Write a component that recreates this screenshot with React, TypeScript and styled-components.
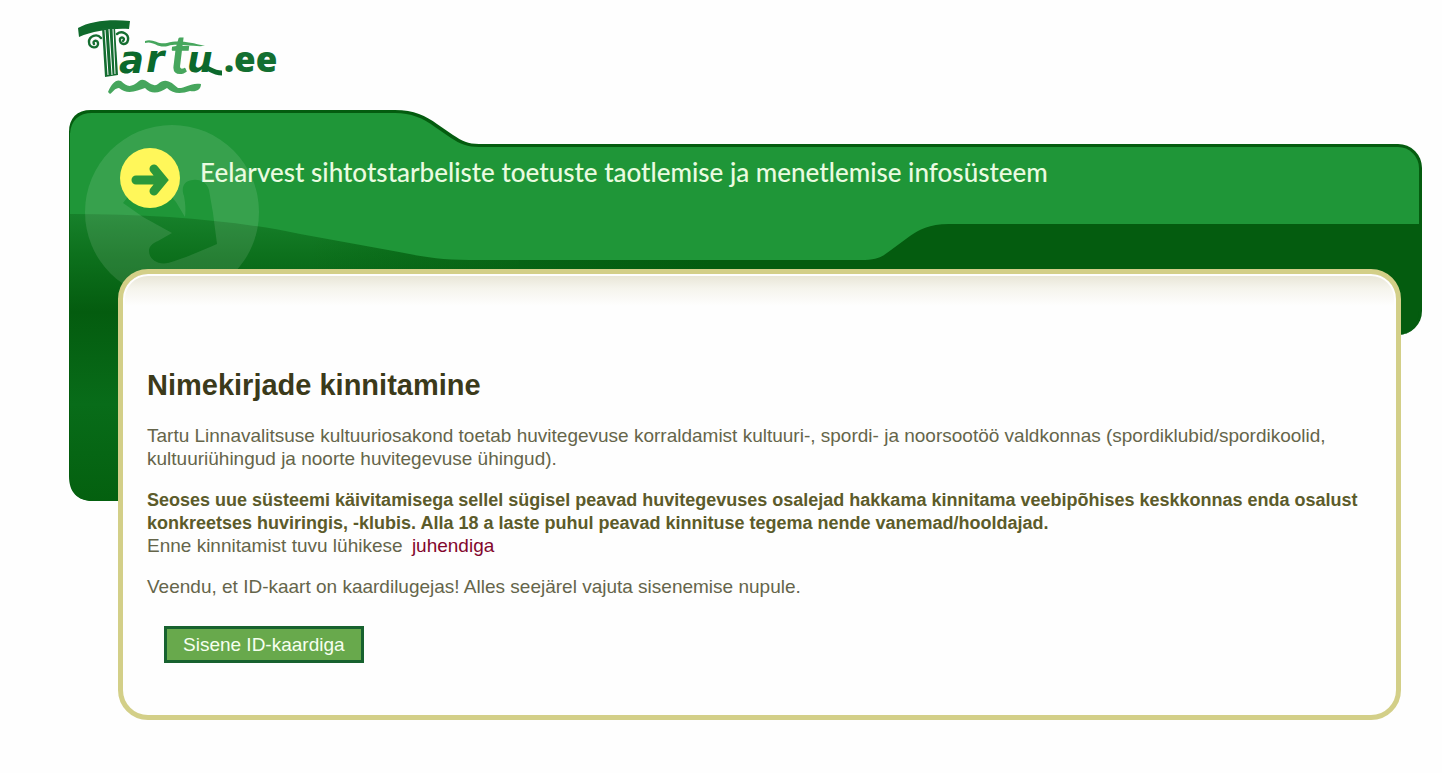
import React from 'react';
import styled, { createGlobalStyle } from 'styled-components';

const color = {
  dark: '#045c0f',
  bright: '#1f9638',
  sand: '#d3cf88',
  text: '#65654a',
  strong: '#5c5b2a',
  heading: '#3b3a1a',
  link: '#82062c',
};

const GlobalStyle = createGlobalStyle`
  *, *::before, *::after { box-sizing: border-box; }
  body {
    margin: 0;
    background: #fefefe;
    font-family: "Liberation Sans", Arial, sans-serif;
  }
`;

const Page = styled.div`
  padding: 0 20px 48px 69px;
`;

const Header = styled.header`
  height: 110px;
  padding: 16px 0 0 3px;
`;

const LogoLink = styled.a`
  display: inline-block;
  svg { display: block; }
`;

const Stage = styled.div`
  position: relative;
  isolation: isolate;
`;

const Backdrop = styled.div`
  position: absolute;
  inset: 0;
  z-index: -1;
  overflow: hidden;
  svg { position: absolute; left: 0; top: 0; }
`;

const FolderEdge = styled.div`
  position: absolute;
  left: 600px;
  right: 0;
  top: 34px;
  height: 191px;
  border: 3px solid ${color.dark};
  border-width: 3px 3px 0 0;
  border-radius: 0 24px 24px 0;
  background: linear-gradient(${color.bright} 77px, ${color.dark} 77px);
`;

const Banner = styled.div`
  display: flex;
  align-items: flex-start;
  gap: 20px;
  min-height: 159px;
  padding: 38px 51px 0;
`;

const BadgeIcon = styled.svg`
  flex: none;
`;

const SystemTitle = styled.p`
  margin: 0;
  color: #eafbe0;
  font: 500 26px/48px Lato, "Century Gothic", sans-serif;
`;

const Panel = styled.main`
  margin: 0 21px 0 49px;
  padding: 88px 24px 52px;
  border: 5px solid ${color.sand};
  border-radius: 30px;
  background: linear-gradient(#e7e4d4, #f5f4ec 14px, #fefefe 32px);
  box-shadow: inset 0 0 0 2px #fefefe;
`;

const Heading = styled.h1`
  margin: 0 0 16px;
  color: ${color.heading};
  font-size: 29px;
  line-height: 46px;
`;

const Paragraph = styled.p`
  margin: 0 0 18px;
  color: ${color.text};
  font-size: 19px;
  line-height: 23px;
  strong {
    color: ${color.strong};
    font-size: 18px;
    line-height: 20px;
  }
`;

const GuideLink = styled.a`
  margin-left: 4px;
  color: ${color.link};
  text-decoration: none;
`;

const LoginButton = styled.button`
  display: block;
  margin: 28px 0 0 17px;
  padding: 0 16px;
  border: 3px solid #17622f;
  background: #68a94c;
  color: #f6fff0;
  font: 19px/31px "Liberation Sans", Arial, sans-serif;
  cursor: pointer;
`;

function Logo() {
  return (
    <svg width="212" height="84" viewBox="72 16 212 84" role="img" aria-label="Tartu.ee">
      <path d="M78 28 C90 21 110 19 130 21 L129 29 C112 28 93 31 79 37 Z" fill="#0f6a2c" />
      <path d="M102 28 H115 L118 75 L105 77 Z" fill="#136c30" />
      <path d="M105 30 L108 75 M109 29 L112 75 M113 29 L115 74" stroke="#fefefe" strokeWidth="1" />
      <g fill="none" stroke="#156e31" strokeWidth="2.4" strokeLinecap="round">
        <path d="M101 38 C97 33 89 36 89 42 C89 49 99 49 98 43 C97 39 92 41 94 44" />
        <path d="M117 34 C122 30 129 34 128 40 C127 46 119 45 120 39 C121 36 126 38 123 41" />
      </g>
      <path d="M145 41 C153 38 158 45 167 43 C178 40 189 42 205 46 C190 47 178 43 168 46 C158 49 153 40 145 43 Z" fill="#46a65d" />
      <g fontFamily="DejaVu Sans, sans-serif" fontStyle="italic" fontWeight="700" fill="#0b692c">
        <text x="119" y="73" fontSize="37">a</text>
        <text x="146" y="72" fontSize="37">r</text>
        <text x="187" y="72" fontSize="36">u</text>
      </g>
      <text x="170" y="74" fontFamily="Lato, sans-serif" fontStyle="italic" fontWeight="700" fontSize="54" fill="#46a65d">t</text>
      <path d="M207 68 C211 70 215 73 222 73" stroke="#0b692c" strokeWidth="5" fill="none" />
      <path
        d="M108 92 C112 83 116 79 121 81 C127 87 131 88 139 81 C146 76 151 89 158 84 C166 77 172 83 178 88 C184 89 191 82 201 84 C201 90 196 92 190 91 C181 94 173 94 167 88 C160 93 151 95 145 88 C137 91 127 95 119 88 C115 88 113 92 110 94 Z"
        fill="#46a65d"
      />
      <text x="224" y="72" fontSize="35" fontFamily="Open Sans, sans-serif" fontWeight="800" fill="#136f31">.ee</text>
    </svg>
  );
}

function FolderArt() {
  return (
    <svg width="900" height="392" viewBox="0 0 900 392" aria-hidden="true">
      <defs>
        <linearGradient id="shade" x1="0" y1="104" x2="0" y2="392" gradientUnits="userSpaceOnUse">
          <stop offset="0" stopColor="#17812b" />
          <stop offset="0.14" stopColor="#0d711d" />
          <stop offset="0.34" stopColor="#045c0f" />
          <stop offset="0.66" stopColor="#086c19" />
          <stop offset="1" stopColor="#04600f" />
        </linearGradient>
        <linearGradient id="toDark" x1="240" y1="0" x2="640" y2="0" gradientUnits="userSpaceOnUse">
          <stop offset="0" stopColor={color.dark} stopOpacity="0" />
          <stop offset="1" stopColor={color.dark} />
        </linearGradient>
        <mask id="arrowCut">
          <rect width="300" height="200" fill="#fff" />
          <path
            d="M54 93 L80 60 L107 92 L116 107 C117 98 116 92 115 86 C111 76 117 70 124 70 C132 69 138 73 140 80 L144 103 L148 134 C130 142 113 149 99 153 C88 155 80 149 80 141 C80 136 84 133 89 131 L103 123 L74 107 Z"
            fill="#000"
          />
        </mask>
      </defs>
      <path d="M0 22 C0 8 8 0 22 0 H326 C345 0 357 6 368 14 L384 25 C393 31 399 34 410 34 H900 V200 H60 V391 H24 C8 391 0 382 0 366 Z" fill={color.dark} />
      <path d="M1 104 H60 V391 H24 C9 391 1 382 1 366 Z M60 104 H450 V200 H60 Z" fill="url(#shade)" />
      <path d="M450 140 H640 V200 H450 Z" fill="#0a6b1a" />
      <path d="M240 104 H640 V200 H240 Z" fill="url(#toDark)" />
      <path
        d="M1 24 C2 10 10 3 23 3 H326 C342 3 354 8 366 17 L382 28 C391 34 399 37 410 37 H900 V114 H880 C860 114 850 120 841 126 L822 140 C814 146 811 149 796 150 H400 C370 150 350 146 330 142 L231 124 C170 111 90 104 1 104 Z"
        fill={color.bright}
      />
      <circle cx="103" cy="102" r="87" fill="#fff" fillOpacity="0.11" mask="url(#arrowCut)" />
    </svg>
  );
}

export default function App() {
  return (
    <>
      <GlobalStyle />
      <Page>
        <Header>
          <LogoLink href="#">
            <Logo />
          </LogoLink>
        </Header>
        <Stage>
          <Backdrop>
            <FolderEdge />
            <FolderArt />
          </Backdrop>
          <Banner>
            <BadgeIcon width="60" height="60" viewBox="0 0 60 60" aria-hidden="true">
              <circle cx="30" cy="30" r="30" fill="#fff75a" />
              <path d="M16 32 H42 M34 21 L43 32 L34 43" fill="none" stroke="#2b983b" strokeWidth="9" strokeLinecap="round" strokeLinejoin="miter" />
            </BadgeIcon>
            <SystemTitle>Eelarvest sihtotstarbeliste toetuste taotlemise ja menetlemise infosüsteem</SystemTitle>
          </Banner>
          <Panel>
            <Heading>Nimekirjade kinnitamine</Heading>
            <Paragraph>
              Tartu Linnavalitsuse kultuuriosakond toetab huvitegevuse korraldamist kultuuri-, spordi- ja noorsootöö valdkonnas (spordiklubid/spordikoolid,
              kultuuriühingud ja noorte huvitegevuse ühingud).
            </Paragraph>
            <Paragraph>
              <strong>
                Seoses uue süsteemi käivitamisega sellel sügisel peavad huvitegevuses osalejad hakkama kinnitama veebipõhises keskkonnas enda osalust
                konkreetses huviringis, -klubis. Alla 18 a laste puhul peavad kinnituse tegema nende vanemad/hooldajad.
              </strong>
              <br />
              Enne kinnitamist tuvu lühikese <GuideLink href="#">juhendiga</GuideLink>
            </Paragraph>
            <Paragraph>Veendu, et ID-kaart on kaardilugejas! Alles seejärel vajuta sisenemise nupule.</Paragraph>
            <LoginButton type="button">Sisene ID-kaardiga</LoginButton>
          </Panel>
        </Stage>
      </Page>
    </>
  );
}
